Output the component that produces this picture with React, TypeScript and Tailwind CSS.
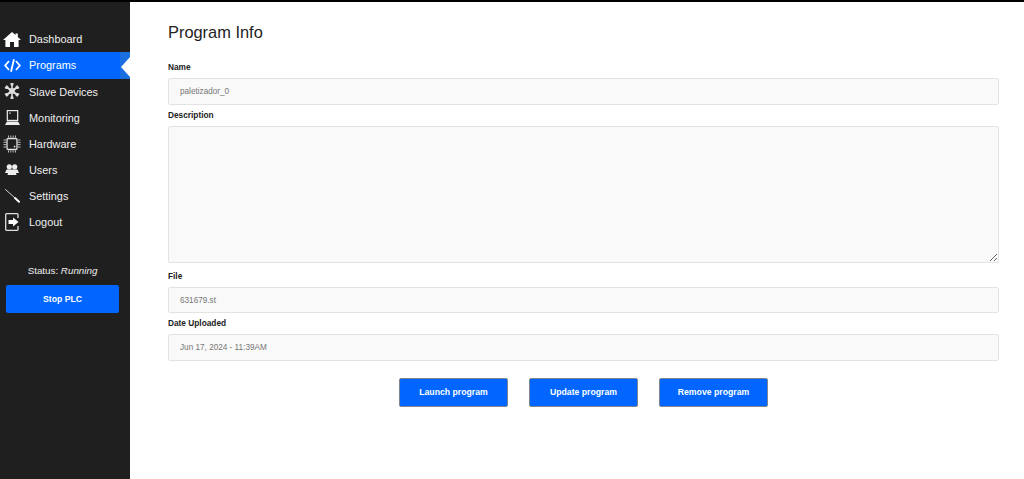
import React from "react";

const Home = () => (
  <svg width="18" height="15" viewBox="0 0 18 15" fill="#fff"><path d="M9 0 L12.500 3.100 V1.500 H14.800 V5.100 L18 8 H15.600 V15 H11 V10 H7 V15 H2.400 V8 H0 Z" /></svg>
);
const Code = () => (
  <svg width="17" height="13" viewBox="0 0 17 13" fill="none" stroke="#fff" strokeWidth="1.800"><path d="M5 2 L1.200 6.500 L5 11" /><path d="M12 2 L15.800 6.500 L12 11" /><path d="M10 0.300 L7 12.700" /></svg>
);
const Snow = () => (
  <svg width="16" height="16" viewBox="0 0 16 16" fill="#dcdcdc" className="-mt-[3px]"><path d="M6.500 0 H9.500 V1.800 L8.800 3 V5.800 L11.200 4.400 L11.900 3.100 L13.500 2.200 L15.500 5 L13.900 6 H12.400 L10 8 L12.400 10 H13.900 L15.500 11 L13.500 13.800 L11.900 12.900 L11.200 11.600 L8.800 10.200 V13 L9.500 14.200 V16 H6.500 V14.200 L7.200 13 V10.200 L4.800 11.600 L4.100 12.900 L2.500 13.800 L0.500 11 L2.100 10 H3.600 L6 8 L3.600 6 H2.100 L0.500 5 L2.500 2.200 L4.100 3.100 L4.800 4.400 L7.200 5.800 V3 L6.500 1.800 Z" /><circle cx="8" cy="8" r="2.800" /></svg>
);
const Monitor = () => (
  <svg width="15" height="15" viewBox="0 0 15 15" className="-mt-px"><rect x="2.300" y="0.600" width="10.400" height="9.800" fill="#1f1f1f" stroke="#eee" strokeWidth="1.200" /><rect x="4.200" y="2.600" width="1.800" height="1" fill="#ddd" /><path d="M2 11.500 H13 L15 15 H0 Z" fill="#eee" /></svg>
);
const Chip = () => (
  <svg width="18" height="18" viewBox="0 0 18 18" fill="none" stroke="#bdbdbd"><rect x="4" y="3.500" width="10" height="11" rx="1.200" strokeWidth="1.300" stroke="#e4e4e4" /><path d="M0.500 5h2.500M0.500 7.300h2.500M0.500 9.600h2.500M0.500 12h2.500M15 5h2.500M15 7.300h2.500M15 9.600h2.500M15 12h2.500M5.500 0.500v2M7.800 0.500v2M10.200 0.500v2M12.500 0.500v2M5.500 15.500v2M7.800 15.500v2M10.200 15.500v2M12.500 15.500v2" strokeWidth="1" /><rect x="10.800" y="10.800" width="1.500" height="1.500" fill="#eee" stroke="none" /></svg>
);
const Users = () => (
  <svg width="14" height="11" viewBox="0 0 14 11" fill="#eee" className="-mt-px"><circle cx="4.300" cy="2.800" r="2.600" /><circle cx="9.700" cy="2.800" r="2.600" /><path d="M0 9 L1.500 5.500 H12.500 L14 9 H11 L11.500 11 H2.500 L3 9 Z" /></svg>
);
const Wrench = () => (
  <svg width="15" height="14" viewBox="0 0 15 14" fill="none" stroke="#e8e8e8" strokeLinecap="round"><path d="M0.500 0.500 L9.500 8.500" strokeWidth="0.900" /><path d="M10 9 L14 12.800" strokeWidth="2" stroke="#fff" /></svg>
);
const Logout = () => (
  <svg width="15" height="18" viewBox="0 0 15 18" fill="none"><path d="M13 5 V1.500 a.8.8 0 0 0-.8-.8 H1.500 a.8.8 0 0 0-.8.8 V16.500 a.8.8 0 0 0 .8.8 H12.200 a.8.8 0 0 0 .8-.8 V13" stroke="#e0e0e0" strokeWidth="1.300" /><path d="M3.500 7 H8 V4.500 L13.500 9 L8 13.500 V11 H3.500Z" fill="#fff" /></svg>
);

const items = [
  { label: "Dashboard", icon: <Home /> },
  { label: "Programs", icon: <Code />, active: true },
  { label: "Slave Devices", icon: <Snow /> },
  { label: "Monitoring", icon: <Monitor /> },
  { label: "Hardware", icon: <Chip /> },
  { label: "Users", icon: <Users /> },
  { label: "Settings", icon: <Wrench /> },
  { label: "Logout", icon: <Logout /> },
];

const labelCls = "block h-[21px] text-[8.3px] leading-[21px] font-bold text-[#222]";
const inputCls = "block w-full h-[26.4px] px-[11px] text-[8.2px] text-[#777] bg-[#f9f9f9] border border-[#e3e3e3] rounded-[2px] outline-none";

function Field({ label, value }: { label: string; value: string }) {
  return (
    <div className="flex flex-col">
      <label className={labelCls}>{label}</label>
      <input readOnly value={value} className={inputCls} />
    </div>
  );
}

function ActionButton({ children }: { children: React.ReactNode }) {
  return (
    <button className="w-[109px] h-[29px] pt-px bg-[#0066ff] text-white text-[8.7px] font-bold border border-[#7d8590] rounded-[2px]">
      {children}
    </button>
  );
}

export default function App() {
  return (
    <div className="w-[1024px] h-[479px] flex flex-col overflow-hidden bg-white font-['Liberation_Sans',Arial,sans-serif]">
      <div className="h-[2px] bg-black shrink-0" />
      <div className="flex flex-1 min-h-0">
        <aside className="w-[130px] shrink-0 bg-[#1f1f1f] flex flex-col pt-[24px]">
          <nav className="flex flex-col">
            {items.map((it) => (
              <div
                key={it.label}
                className={`relative flex text-[10.9px] ${it.active ? "h-[27px] bg-[#0066ff] text-white" : "h-[26px] text-[#eeeeee]"}`}
              >
                <div className="h-[26px] flex items-center">
                  <span className="w-[24px] shrink-0 flex items-center justify-center">{it.icon}</span>
                  <span className="ml-[5px]">{it.label}</span>
                </div>
                {it.active && (
                  <>
                    <span className="absolute right-0 top-0 bottom-0 w-[10px] bg-[#1a6ee0]" />
                    <span className="absolute right-0 top-[5px] w-0 h-0 border-y-[10px] border-y-transparent border-r-[9px] border-r-white" />
                  </>
                )}
              </div>
            ))}
          </nav>
          <div className="w-[125px] mt-[25px] h-[22px] flex items-center justify-center text-[9.8px] text-[#eeeeee]">
            Status:&nbsp;<i>Running</i>
          </div>
          <button className="w-[113px] mt-[3px] ml-[6px] h-[28px] pt-px bg-[#0066ff] text-white text-[8.7px] font-bold rounded-[2px]">
            Stop PLC
          </button>
        </aside>
        <main className="flex-1 min-w-0 pl-[38px] pr-[25px] pt-[18px]">
          <h1 className="text-[16.400px] leading-[24px] font-normal text-[#222] h-[24px]">Program Info</h1>
          <div className="mt-[13.4px] flex flex-col">
            <Field label="Name" value="paletizador_0" />
            <div className="flex flex-col">
              <label className={labelCls}>Description</label>
              <textarea readOnly className="block w-full h-[137px] px-[11px] py-[6px] text-[8.200px] text-[#777] bg-[#f9f9f9] border border-[#e3e3e3] rounded-[2px] outline-none resize-y" />
            </div>
            <div className="mt-[3.3px]">
              <Field label="File" value="631679.st" />
            </div>
            <Field label="Date Uploaded" value="Jun 17, 2024 - 11:39AM" />
          </div>
          <div className="mt-[16.8px] flex justify-center gap-[21px]">
            <ActionButton>Launch program</ActionButton>
            <ActionButton>Update program</ActionButton>
            <ActionButton>Remove program</ActionButton>
          </div>
        </main>
      </div>
    </div>
  );
}
